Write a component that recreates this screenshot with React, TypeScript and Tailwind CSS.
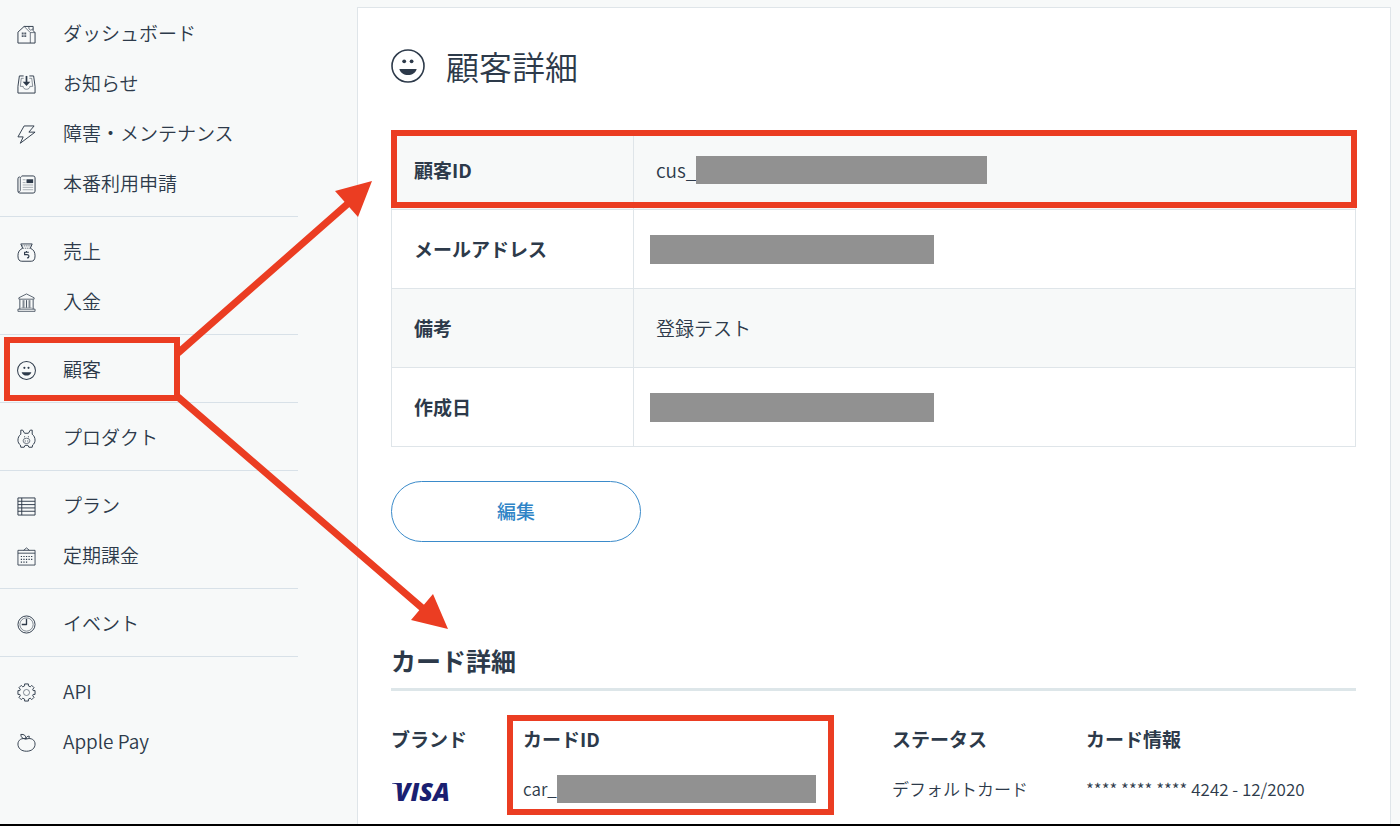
import React from "react";

interface NavItem {
  label: string;
  icon: React.ReactNode;
  marked?: boolean;
}

interface Detail {
  label: string;
  text?: string;
  mask?: string;
  marked?: boolean;
}

const Icon = ({ children }: { children: React.ReactNode }) => (
  <svg
    viewBox="0 0 20 20"
    className="mt-[2px] h-[19px] w-[19px] shrink-0"
    fill="none"
    stroke="currentColor"
    strokeWidth="1"
    strokeLinejoin="round"
    aria-hidden="true"
  >
    {children}
  </svg>
);

const Smile = ({ className, line }: { className: string; line: number }) => (
  <svg viewBox="0 0 34 34" className={className} aria-hidden="true">
    <circle cx="17" cy="17" r="16" fill="none" stroke="currentColor" strokeWidth={line} />
    <circle cx="13.200" cy="12.300" r="1.900" fill="currentColor" />
    <circle cx="20.600" cy="12.300" r="1.900" fill="currentColor" />
    <path d="M8.300 20h17.400c-1.300 4-4.600 6-8.700 6s-7.400-2-8.700-6z" fill="currentColor" />
  </svg>
);

const groups: NavItem[][] = [
  [
    {
      label: "ダッシュボード",
      icon: (
        <Icon>
          <path d="M1 19V7.500l6.500-6H17V6l2 2v11z" />
          <path d="M7.500 1.500L14 8v11M14 8h5M12.500 1.500V4l2 1.500L17 4" strokeWidth="0.7" />
          <path d="M5 8h2v2H5zM7.700 8h2v2h-2zM5 10.700h2v2H5zM7.700 10.700h2v2h-2z" fill="currentColor" stroke="none" opacity="0.8" />
        </Icon>
      ),
    },
    {
      label: "お知らせ",
      icon: (
        <Icon>
          <path d="M7 1H2.500L1 12v7h18v-7L17.500 1H13" />
          <path d="M7 3.500H4.500L3.500 12h3c0 2 1.500 3 3.500 3s3.500-1 3.500-3h3l-1-8.500H13" strokeWidth="0.8" opacity="0.7" />
          <path d="M10 1v7" strokeWidth="1.800" />
          <path d="M6 7h8l-4 4.500z" fill="currentColor" stroke="none" />
        </Icon>
      ),
    },
    {
      label: "障害・メンテナンス",
      icon: (
        <Icon>
          <path d="M7.500 1h10.500L12.500 7.500H19L3.500 19.200 6.500 12.500H1z" />
        </Icon>
      ),
    },
    {
      label: "本番利用申請",
      icon: (
        <Icon>
          <path d="M5 1h12a2 2 0 0 1 2 2v14a2 2 0 0 1-2 2H3a2 2 0 0 1-2-2V4a2 2 0 0 1 2-2" />
          <path d="M5 1.500a2 2 0 0 0-1.500 2V16a1.500 1.500 0 0 1-2 1.500" strokeWidth="0.8" />
          <path d="M10 4.500h7v4h-7z" fill="currentColor" stroke="none" />
          <path d="M6 5h3M6 8h3M6 10.500h11M6 13h11M6 15.500h11" strokeWidth="0.8" opacity="0.5" />
        </Icon>
      ),
    },
  ],
  [
    {
      label: "売上",
      icon: (
        <Icon>
          <path d="M4 1h12l-2 4.500c3.500 1.500 5 4 5 8 0 4-1.500 5.700-4 5.700H5c-2.500 0-4-1.700-4-5.700 0-4 1.500-6.500 5-8z" />
          <path d="M6 5.500h8M5 3h10" strokeWidth="0.7" strokeDasharray="1.500 0.800" />
          <path d="M12.500 9.700H8v2.600h2.500c3 0 2.500 3.500 0 3.500M10 8.500v1" strokeWidth="1.200" />
        </Icon>
      ),
    },
    {
      label: "入金",
      icon: (
        <Icon>
          <path d="M2 6.500V5l8-4 8 4v1.500zM1 19.300V17h18v2.300z" strokeWidth="0.8" />
          <path d="M3 7v10M17 7v10M6.500 7.500v8M10 7.500v8M13.500 7.500v8" strokeWidth="0.9" />
          <path d="M8 7.500v8M12 7.500v8M4.500 15.500h11" strokeWidth="0.5" opacity="0.7" />
        </Icon>
      ),
    },
  ],
  [
    {
      label: "顧客",
      icon: <Smile className="mt-[2px] h-[19px] w-[19px] shrink-0" line={1.8} />,
      marked: true,
    },
  ],
  [
    {
      label: "プロダクト",
      icon: (
        <Icon>
          <path d="M8 4.500h4l2-3.300h2L16 5.500c2 1.500 3 3.800 3 6.300 0 2-1 4-2.500 5l-.5 2.400h-3.500l-1-2h-3l-1 2H4l-.5-2.400c-1.500-1-2.500-3-2.500-5 0-2.500 1-4.800 3-6.300l0-4.300h2z" />
          <ellipse cx="10" cy="12.500" rx="3.600" ry="2.800" strokeWidth="0.7" />
          <path d="M8.700 12v1.300M11.300 12v1.300M8 7.500v1.300M12 7.500v1.300" strokeWidth="0.8" />
        </Icon>
      ),
    },
  ],
  [
    {
      label: "プラン",
      icon: (
        <Icon>
          <path d="M1 1h18v18H1zM5 1v18M1 4.500h18M1 8h18M1 11.500h18M1 15h18" />
        </Icon>
      ),
    },
    {
      label: "定期課金",
      icon: (
        <Icon>
          <path d="M1 3.500h18V19H1zM1 6.500h18M7 3.500l3-2.500 3 2.500" strokeWidth="0.9" />
          <path d="M4 10h13M4 13h13M4 16h8" strokeDasharray="1.300 1.400" strokeWidth="1.300" />
        </Icon>
      ),
    },
  ],
  [
    {
      label: "イベント",
      icon: (
        <Icon>
          <circle cx="10" cy="10" r="9" />
          <circle cx="10" cy="10" r="7" strokeWidth="0.6" />
          <path d="M10 4v6H5" strokeWidth="1.400" />
        </Icon>
      ),
    },
  ],
  [
    {
      label: "API",
      icon: (
        <Icon>
          <path d="M8 1h4v2l2 1 1.500-1.500 2.500 2.500L16.500 6.500l.5 1.500h2v4h-2l-.5 1.500L18 15l-2.500 2.500L14 16l-2 1v2H8v-2l-2-1-1.500 1.500L2 15l1.500-1.500L3 12H1V8h2l.5-1.500L2 5l2.500-2.500L6 4l2-1z" />
          <circle cx="10" cy="10" r="3.200" strokeWidth="0.6" />
        </Icon>
      ),
    },
    {
      label: "Apple Pay",
      icon: (
        <Icon>
          <path d="M10 6.300c5-1.600 9 1 9 5.400 0 4.300-3.500 7.500-9 7.500s-9-3.200-9-7.500c0-4.400 4-7 9-5.400z" />
          <path d="M9.500 6.300C6 6.300 4 4.500 4 1.500c3.500-.5 5.500 1.300 5.500 4.800zC10 4 11 3 13 3.500L12.500 6" />
        </Icon>
      ),
    },
  ],
];

const details: Detail[] = [
  { label: "顧客ID", text: "cus_", mask: "h-7 w-[291px]", marked: true },
  { label: "メールアドレス", mask: "-ml-[6px] h-[29px] w-[284px]" },
  { label: "備考", text: "登録テスト" },
  { label: "作成日", mask: "-ml-[6px] h-[29px] w-[284px]" },
];

const Sidebar = () => (
  <nav className="w-[298px] shrink-0 pt-2">
    {groups.map((group, i) => (
      <ul key={i} className={`${i > 0 ? "pt-[9px]" : ""} ${i < groups.length - 1 ? "border-b border-[#d8e1e8] pb-2" : ""}`}>
        {group.map((item) => (
          <li key={item.label} className="relative">
            <a href="#" className="flex h-[50px] items-center gap-[27px] pl-[17px] text-[19px]">
              {item.icon}
              {item.label}
            </a>
            {item.marked && (
              <span className="absolute -top-[7px] left-1 h-16 w-[176px] border-[6px] border-[#eb3d22]" />
            )}
          </li>
        ))}
      </ul>
    ))}
  </nav>
);

const Visa = () => (
  <svg viewBox="0 0 64 40" className="h-10 w-16" role="img" aria-label="VISA">
    <text x="4" y="32" fontSize="25" fontWeight="800" fontStyle="italic" fontFamily="Open Sans, sans-serif" fill="#1a1f71">
      VISA
    </text>
    <path d="M1 14h9l1 5c-2-2.500-5-4-10-4.500z" fill="#1a1f71" />
  </svg>
);

const App = () => {
  return (
    <div className="relative flex min-h-screen border-b-2 border-black bg-[#f7f9f9] font-['Noto_Sans_CJK_JP',sans-serif] font-[350] text-[#2d3a4a]">
      <Sidebar />

      {/* CUSTOMER */}
      <main className="mt-[7px] mr-[9px] ml-[59px] grow border border-b-0 border-[#dfe5e9] bg-white pr-[34px] pl-[33px]">
        <h1 className="mt-[34px] flex items-center gap-[21px] text-[33px] leading-[48px]">
          <Smile className="h-[34px] w-[34px]" line={1.6} />
          顧客詳細
        </h1>

        <table className="mt-10 w-full border-collapse text-[19px]">
          <tbody>
            {details.map((row) => (
              <tr key={row.label} className="relative h-[79px] border border-[#dfe5e9] odd:bg-[#f7f9f9]">
                <th scope="row" className="w-[242px] border-r border-[#dfe5e9] pl-[22px] text-left font-bold">
                  {row.label}
                </th>
                <td className="pl-[22px]">
                  <div className="flex items-center">
                    {row.text}
                    {row.mask && <span className={`${row.mask} bg-[#919191]`} />}
                  </div>
                  {row.marked && (
                    <span className="absolute -inset-x-[2px] -top-[2px] bottom-px border-[6px] border-[#eb3d22]" />
                  )}
                </td>
              </tr>
            ))}
          </tbody>
        </table>

        <button className="mt-[34px] h-[61px] w-[250px] rounded-full border border-[#3b8bca] text-[19px] font-medium text-[#2f84c6]">
          編集
        </button>

        {/* CARD */}
        <h2 className="mt-[100px] border-b-[3px] border-[#dde6e9] pb-[10px] text-[25px] leading-9 font-bold">
          カード詳細
        </h2>
        <table className="mt-[23px] w-full table-fixed text-left text-[17px]">
          <thead className="text-[19px]">
            <tr className="h-[50px]">
              <th className="w-[132px] font-bold">ブランド</th>
              <th className="relative w-[369px] font-bold">
                カードID
                <span className="absolute top-px -left-[16px] h-[100px] w-[327px] border-[6px] border-[#eb3d22]" />
              </th>
              <th className="w-[194px] font-bold">ステータス</th>
              <th className="font-bold">カード情報</th>
            </tr>
          </thead>
          <tbody>
            <tr className="h-[50px]">
              <td>
                <Visa />
              </td>
              <td>
                <div className="flex items-center">
                  car_
                  <span className="h-7 w-[259px] bg-[#919191]" />
                </div>
              </td>
              <td>デフォルトカード</td>
              <td>**** **** **** 4242 - 12/2020</td>
            </tr>
          </tbody>
        </table>
      </main>

      {/* ARROWS */}
      <svg className="pointer-events-none absolute top-0 left-0" width="460" height="640" aria-hidden="true">
        <path d="M178 353L352 200M178 397L428 613" stroke="#eb3d22" strokeWidth="7" />
        <path d="M372 181L335 191L358 217zM448 629L433 594L411 620z" fill="#eb3d22" />
      </svg>
    </div>
  );
};

export default App;
